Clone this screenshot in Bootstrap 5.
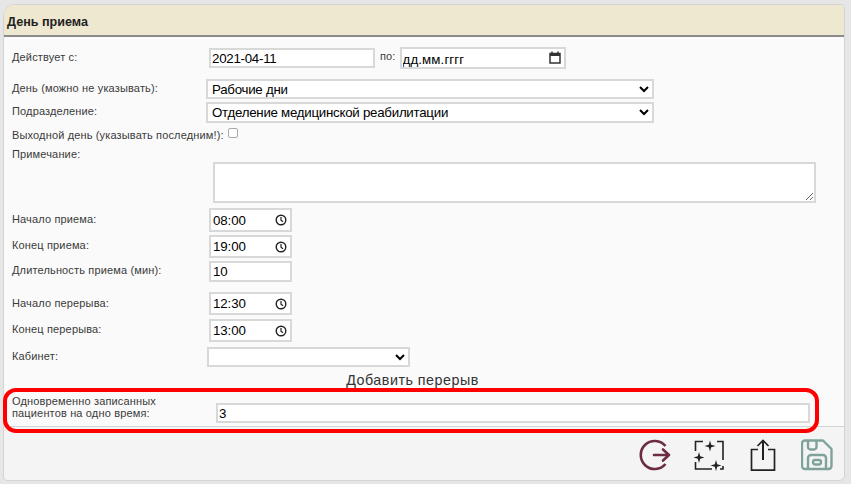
<!DOCTYPE html>
<html lang="ru"><head><meta charset="utf-8">
<link href="https://cdn.jsdelivr.net/npm/bootstrap@5.3.0/dist/css/bootstrap.min.css" rel="stylesheet">
<style>
html,body{height:484px;overflow:hidden;margin:0;background:#e6e6e6}
body{font-family:"Liberation Sans",Arial,sans-serif;font-size:11px;color:#3a3a3a;padding:4px 6px 3px 3px}
.panel-box{height:477px;border:1px solid #d4d4d4;border-radius:12px 4px 6px 4px;background:#f4f4f4;position:relative}
.panel-head{height:32px;background:#efe8d1;border-bottom:2px solid #8a8a8a;border-radius:11px 3px 0 0;font-weight:700;font-size:12.6px;color:#222;padding:10px 0 0 3px;line-height:14px}
.panel-body{height:390px;background:#fafafa;border-bottom:1px solid #d4d4d4;padding:10px 0 0 8px}
.frow{display:flex;align-items:flex-start}
.lbl{width:190px;letter-spacing:.15px;line-height:13px;flex:none;white-space:nowrap}
.lbl-two{line-height:12px;padding-top:2px}
.fc{font-family:"Liberation Sans",Arial,sans-serif;font-size:13.3px;letter-spacing:-.26px;color:#000;background:#fff;border:2px solid #d8d8d8;border-radius:0;padding:0 1px;box-sizing:border-box;outline:0;display:block;line-height:1}
.fld{position:relative;flex:none}
.fld svg{position:absolute}
.w-date{width:166px;height:20px;margin:1px 0 0 7px}
.w-to{width:166px;height:22px;padding-top:2px;letter-spacing:.1px}
.to-lbl{margin:3px 4px 0 5px;letter-spacing:.15px;line-height:13px}
.ic-cal{right:5px;top:4px}
.ic-clk{right:5px;top:6px}
.w-sel{width:448px;margin-left:4px;padding:0}
.h20{height:20px}.h21{height:21px}.h23{height:23px}.h24{height:24px}
.w-time{width:83px;margin-left:7px;padding-left:2px;letter-spacing:-.1px}
.w-cab{width:203px;height:20px;margin-left:5px}
.w-note{width:603px;height:41px;margin-left:201px;display:block}
.w-num{width:594px;height:20px;margin:10px 0 0 14px}
.m1{margin-top:1px}.m3{margin-top:3px}.m4{margin-top:4px}.m5{margin-top:5px}.m6{margin-top:6px}.m10{margin-top:10px}
.t1{padding-top:1px}.t3{padding-top:3px}.t4{padding-top:4px}.t5{padding-top:5px}
.chk{appearance:none;-webkit-appearance:none;width:10px;height:10px;margin:0 0 0 26px;background:#fff;border:1px solid #a8a8a8;border-radius:2px;flex:none;display:block}
.add-link{text-align:center;font-size:14.3px;line-height:18px;color:#333;width:801px;letter-spacing:.5px}
.panel-foot{display:flex;justify-content:flex-end;gap:22px;padding:12px 11px 0 0}
.panel-foot svg{display:block}
.red-mark{position:absolute;left:-1px;top:383px;width:816px;height:45px;border:4px solid #f00;border-radius:13px;pointer-events:none;box-sizing:border-box}
</style></head><body>
<div class="panel-box">
<div class="panel-head">День приема</div>
<form class="panel-body">
<div class="frow"><div class="lbl t4">Действует с:</div><input class="fc w-date" type="text" value="2021-04-11"><span class="to-lbl">по:</span><div class="fld"><input class="fc w-to" type="text" value="дд.мм.гггг"><svg class="ic-cal" width="12" height="13" viewBox="0 0 12 13"><path d="M1 2.500h10v9.500H1z" fill="none" stroke="#333" stroke-width="1.500"/><path d="M1 2h10v3H1z" fill="#333"/><path d="M3 0.500v2M9 0.500v2" stroke="#333" stroke-width="1.500"/></svg></div></div>
<div class="frow m10"><div class="lbl t3">День (можно не указывать):</div><select class="fc w-sel h20"><option>Рабочие дни</option></select></div>
<div class="frow m3"><div class="lbl t3">Подразделение:</div><select class="fc w-sel h21"><option>Отделение медицинской реабилитации</option></select></div>
<div class="frow m5"><div class="lbl t1">Выходной день (указывать последним!):</div><input class="chk" type="checkbox"></div>
<div class="frow m6"><div class="lbl">Примечание:</div></div>
<textarea class="fc w-note m1"></textarea>
<div class="frow m5"><div class="lbl t5">Начало приема:</div><div class="fld"><input class="fc w-time h24" type="text" value="08:00"><svg class="ic-clk" width="12" height="12" viewBox="0 0 12 12"><circle cx="6" cy="6" r="4.800" fill="none" stroke="#222" stroke-width="1.400"/><path d="M6 3v3.200l2 1.600" fill="none" stroke="#222" stroke-width="1.200"/></svg></div></div>
<div class="frow m3"><div class="lbl t4">Конец приема:</div><div class="fld"><input class="fc w-time h23" type="text" value="19:00"><svg class="ic-clk" width="12" height="12" viewBox="0 0 12 12"><circle cx="6" cy="6" r="4.800" fill="none" stroke="#222" stroke-width="1.400"/><path d="M6 3v3.200l2 1.600" fill="none" stroke="#222" stroke-width="1.200"/></svg></div></div>
<div class="frow m3"><div class="lbl t3">Длительность приема (мин):</div><input class="fc w-time h21" type="text" value="10"></div>
<div class="frow m10"><div class="lbl t5">Начало перерыва:</div><div class="fld"><input class="fc w-time h23" type="text" value="12:30"><svg class="ic-clk" width="12" height="12" viewBox="0 0 12 12"><circle cx="6" cy="6" r="4.800" fill="none" stroke="#222" stroke-width="1.400"/><path d="M6 3v3.200l2 1.600" fill="none" stroke="#222" stroke-width="1.200"/></svg></div></div>
<div class="frow m4"><div class="lbl t4">Конец перерыва:</div><div class="fld"><input class="fc w-time h23" type="text" value="13:00"><svg class="ic-clk" width="12" height="12" viewBox="0 0 12 12"><circle cx="6" cy="6" r="4.800" fill="none" stroke="#222" stroke-width="1.400"/><path d="M6 3v3.200l2 1.600" fill="none" stroke="#222" stroke-width="1.200"/></svg></div></div>
<div class="frow m5"><div class="lbl t3">Кабинет:</div><select class="fc w-cab"><option></option></select></div>
<div class="add-link m4">Добавить перерыв</div>
<div class="frow m4"><div class="lbl lbl-two">Одновременно записанных<br>пациентов на одно время:</div><input class="fc w-num" type="text" value="3"></div>
</form>
<div class="panel-foot">
<svg width="32" height="32" viewBox="0 0 32 32" fill="none" stroke="#6b2d3f" stroke-width="2.600"><path d="M26.500 7A14 14 0 1 0 26.500 25"/><path d="M15 16h15M24 10.500l6 5.500-6 5.500" stroke-linecap="round" stroke-linejoin="round"/></svg>
<svg width="32" height="32" viewBox="0 0 32 32" fill="none" stroke="#222" stroke-width="1.600"><path d="M2.500 12V2.500H10M24 2.500h6V21M2.500 23v7H19M27 30h3v-3"/><path d="M17 1.500l1.200 4.300 4.300 1.200-4.300 1.200-1.200 4.300-1.200-4.300-4.300-1.200 4.300-1.200zM6 13l1.200 4.300 4.300 1.200-4.300 1.200L6 24l-1.200-4.300-4.300-1.200 4.300-1.200zM23 21l1.200 4.300 4.300 1.200-4.300 1.200-1.200 4.300-1.200-4.300-4.300-1.200 4.300-1.200z" fill="#222" stroke="none"/></svg>
<svg width="32" height="32" viewBox="0 0 32 32" fill="none" stroke="#222" stroke-width="1.700"><path d="M11 10.500H4.500V31.200H27.500V10.500H21"/><path d="M16 1V21" stroke-width="2"/><path d="M10.500 7L16 1.500 21.500 7" stroke-width="1.700"/></svg>
<svg width="32" height="32" viewBox="0 0 32 32" fill="none" stroke="#7fa39a" stroke-width="2.400" stroke-linejoin="round"><path d="M4 1.500H22L30.500 10V27a3 3 0 0 1-3 3H4a3 3 0 0 1-3-3V4.500a3 3 0 0 1 3-3z"/><path d="M7 2v6a2.500 2.500 0 0 0 2.500 2.500H13a2.500 2.500 0 0 0 2.500-2.500V2"/><path d="M7 30V19a3 3 0 0 1 3-3H22a3 3 0 0 1 3 3v11"/><rect x="12" y="21" width="8" height="4.500" rx="2.200"/></svg>
</div>
<div class="red-mark"></div>
</div>
</body></html>
